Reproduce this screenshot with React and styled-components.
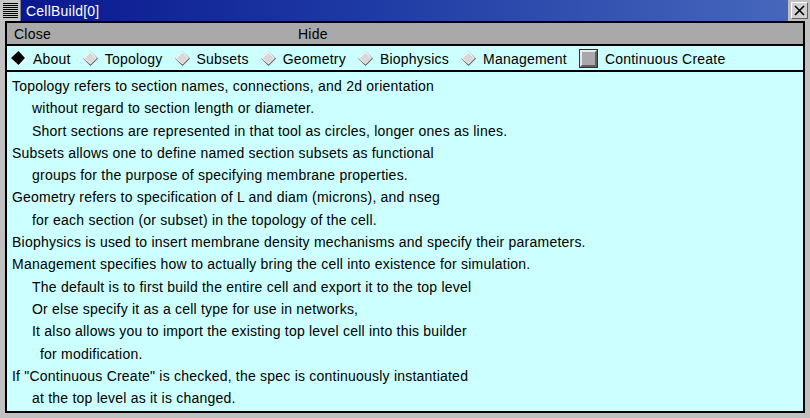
import React from 'react'
import styled, { createGlobalStyle } from 'styled-components'

const Global = createGlobalStyle`
  html, body {
    margin: 0;
    padding: 0;
    background: #c0c0c0;
  }
  body {
    font-family: "Liberation Sans", Arial, Helvetica, sans-serif;
    letter-spacing: 0.22px;
  }
`

const Window = styled.div`
  width: 810px;
  height: 418px;
  display: flex;
  flex-direction: column;
  background: #c0c0c0;
  overflow: hidden;
`

const TitleBar = styled.div`
  height: 21px;
  display: flex;
  align-items: stretch;
`

const MenuBox = styled.div`
  width: 21px;
  height: 21px;
  box-sizing: border-box;
  background: #c8c8c8;
  border-right: 1px solid #808080;
  display: flex;
  align-items: center;
  justify-content: center;
`

const TitleStrip = styled.div`
  flex: 1;
  display: flex;
  align-items: center;
  padding-left: 5px;
  background: linear-gradient(to right, #0a1890 0%, #1e3aa4 45%, #4667bc 100%);
  color: #ffffff;
  font-size: 14px;
`

const CloseBox = styled.div`
  width: 22px;
  display: flex;
  align-items: center;
  justify-content: center;
  background: #c0c0c0;
`

const CloseBtn = styled.div`
  width: 17px;
  height: 17px;
  box-sizing: border-box;
  border: 1px solid;
  border-color: #ffffff #606060 #606060 #ffffff;
  background: #d0d0d0;
  display: flex;
  align-items: center;
  justify-content: center;
`

const Frame = styled.div`
  flex: 1;
  display: flex;
  padding: 0 5px 5px 5px;
`

const Panel = styled.div`
  flex: 1;
  display: flex;
  flex-direction: column;
  border: 2px solid #000000;
  background: #ccffff;
`

const MenuBar = styled.div`
  height: 21px;
  display: flex;
  align-items: center;
  background: #a9a9a9;
  border-bottom: 2px solid #000000;
  font-size: 14px;
  color: #000;
`

const MenuItem = styled.span`
  width: ${p => p.$w}px;
  padding-left: 7px;
`

const RadioRow = styled.div`
  height: 23px;
  display: flex;
  align-items: center;
  padding-left: 4px;
  padding-top: 1px;
  border-bottom: 2px solid #000000;
  font-size: 14px;
  color: #000;
`

const Radio = styled.label`
  display: flex;
  align-items: center;
  gap: 7px;
  margin-right: 12px;
`

const Check = styled.span`
  width: 19px;
  height: 19px;
  box-sizing: border-box;
  border: 1px solid #303030;
  display: inline-flex;
  margin-right: 7px;
`

const CheckInner = styled.span`
  flex: 1;
  border: 2px solid;
  border-color: #e8e8e8 #606060 #606060 #e8e8e8;
  background: #a8a8a8;
`

const TextArea = styled.div`
  flex: 1;
  padding: 3px 0 0 5px;
  font-size: 14px;
  line-height: 22.3px;
  color: #000;
`

const Line = styled.div`
  padding-left: ${p => p.$indent || 0}px;
  white-space: nowrap;
`

const Diamond = ({ on }) => (
  <svg width="15" height="15" viewBox="0 0 15 15">
    {on ? (
      <>
        <polygon points="7.5,0 15,7.5 7.5,15 0,7.5" fill="#ffffff" />
        <polygon points="7.5,0 14,7 7.5,14 0,7" fill="#000000" />
      </>
    ) : (
      <>
        <polygon points="7.5,0 15,7.5 7.5,15 0,7.5" fill="#5e5e5e" />
        <polygon points="7.5,0 14,7 7.5,13.5 0,7" fill="#ffffff" />
        <polygon points="7.5,1.6 13,7.3 7.5,12.8 1.6,7.3" fill="#d8d8d8" />
      </>
    )}
  </svg>
)

const radios = ['About', 'Topology', 'Subsets', 'Geometry', 'Biophysics', 'Management']

const lines = [
  [0, 'Topology refers to section names, connections, and 2d orientation'],
  [20, 'without regard to section length or diameter.'],
  [20, 'Short sections are represented in that tool as circles, longer ones as lines.'],
  [0, 'Subsets allows one to define named section subsets as functional'],
  [20, 'groups for the purpose of specifying membrane properties.'],
  [0, 'Geometry refers to specification of L and diam (microns), and nseg'],
  [20, 'for each section (or subset) in the topology of the cell.'],
  [0, 'Biophysics is used to insert membrane density mechanisms and specify their parameters.'],
  [0, 'Management specifies how to actually bring the cell into existence for simulation.'],
  [20, 'The default is to first build the entire cell and export it to the top level'],
  [20, 'Or else specify it as a cell type for use in networks,'],
  [20, 'It also allows you to import the existing top level cell into this builder'],
  [28, 'for modification.'],
  [0, 'If "Continuous Create" is checked, the spec is continuously instantiated'],
  [20, 'at the top level as it is changed.'],
]

export default function App() {
  return (
    <Window>
      <Global />
      <TitleBar>
        <MenuBox>
          <svg width="15" height="15" viewBox="0 0 15 15">
            {[0, 2, 4, 6, 8, 10, 12, 14].map(y => (
              <rect key={y} x="0" y={y} width="15" height="1" fill="#000" />
            ))}
          </svg>
        </MenuBox>
        <TitleStrip>CellBuild[0]</TitleStrip>
        <CloseBox>
          <CloseBtn>
            <svg width="11" height="11" viewBox="0 0 11 11">
              <path d="M1 1 L10 10 M10 1 L1 10" stroke="#000" strokeWidth="1.6" />
            </svg>
          </CloseBtn>
        </CloseBox>
      </TitleBar>
      <Frame>
        <Panel>
          <MenuBar>
            <MenuItem $w={277}>Close</MenuItem>
            <MenuItem>Hide</MenuItem>
          </MenuBar>
          <RadioRow>
            {radios.map((r, i) => (
              <Radio key={r}>
                <Diamond on={i === 0} />
                {r}
              </Radio>
            ))}
            <Check><CheckInner /></Check>
            Continuous Create
          </RadioRow>
          <TextArea>
            {lines.map(([ind, t], i) => (
              <Line key={i} $indent={ind}>{t}</Line>
            ))}
          </TextArea>
        </Panel>
      </Frame>
    </Window>
  )
}
